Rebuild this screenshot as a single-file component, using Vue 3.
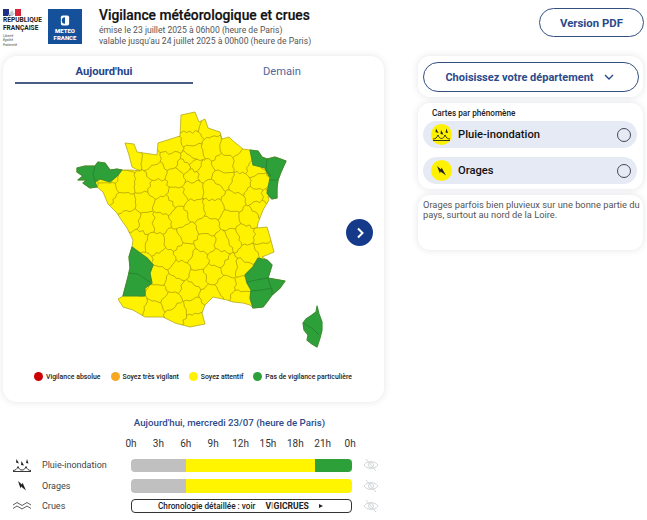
<script setup>
const outline = [[181,115],[195,112],[199,122],[205,119],[208,128],[220,132],[222,139],[229,137],[232,140],[243,149],[250,150],[258,151],[262,157],[267,159],[275,157],[286,161],[281,172],[278,180],[277,188],[277,198],[272,199],[268,196],[269,200],[263,210],[258,223],[257,228],[267,227],[270,237],[274,252],[262,257],[267,260],[272,265],[268,278],[285,281],[280,288],[272,295],[267,302],[263,307],[253,308],[250,305],[243,303],[233,302],[227,300],[213,297],[205,305],[202,313],[205,324],[190,327],[175,323],[163,317],[145,317],[133,310],[123,307],[118,299],[123,296],[128,277],[130,268],[129,257],[132,247],[133,240],[127,228],[120,218],[117,213],[108,204],[103,192],[97,187],[90,188],[83,183],[87,180],[78,180],[83,176],[77,172],[77,168],[85,166],[95,166],[98,162],[105,163],[110,170],[117,169],[122,170],[132,170],[140,171],[132,167],[129,155],[125,143],[134,144],[137,152],[157,155],[158,143],[180,136]]

const greens = [
  [[77,168],[85,166],[95,166],[98,162],[105,163],[110,170],[117,169],[122,170],[118,175],[110,182],[100,179],[95,182],[97,187],[90,188],[83,183],[87,180],[78,180],[83,176],[77,172]],
  [[250,150],[258,151],[262,157],[267,159],[275,157],[286,161],[281,172],[278,180],[277,188],[277,198],[272,199],[267,193],[270,178],[265,168],[253,165]],
  [[132,247],[140,253],[147,258],[153,265],[150,273],[152,283],[145,288],[145,296],[123,296],[128,277],[130,268],[129,257]],
  [[258,258],[267,260],[272,265],[268,278],[285,281],[280,288],[272,295],[267,302],[263,307],[253,308],[250,298],[251,290],[247,283],[245,275],[253,267]],
  [[317,306],[319,314],[322,322],[322,330],[320,338],[317,347],[312,344],[307,340],[308,335],[304,330],[303,323],[306,319],[312,315],[316,312]]
]
const greenInner = 'M95 166L93 174L95 182M267 159L266 170L271 176M269 180L278 180M129 273L138 274L150 282M247 282L256 280L268 278M251 291L262 290L272 288L272 295M268 278L271 288M303 323L312 328L319 335'

const geo = [[5.35,46.1],[3.55,49.55],[3.2,46.4],[6.25,44.1],[6.25,44.65],[7.1,43.95],[4.45,44.75],[4.65,49.6],[1.5,42.95],[4.15,48.3],[2.4,43.1],[2.65,44.3],[5.1,43.55],[-0.35,49.1],[2.65,45.05],[0.2,45.7],[-0.75,45.8],[2.5,47.05],[1.9,45.35],[4.75,47.4],[-2.85,48.45],[2,46.1],[0.75,45.1],[6.35,47.15],[5.2,44.7],[1,49.1],[1.35,48.4],[-4.05,48.25],[4.2,44],[1.15,43.35],[0.45,43.7],[-0.55,44.85],[3.35,43.6],[-1.65,48.15],[1.55,46.75],[0.7,47.25],[5.55,45.25],[5.7,46.75],[-0.75,44],[1.4,47.6],[4.15,45.75],[3.8,45.1],[-1.65,47.35],[2.35,47.9],[1.6,44.6],[0.45,44.35],[3.5,44.5],[-0.55,47.4],[-1.3,49.1],[4.25,48.95],[5.2,48.1],[-0.65,48.15],[6.2,48.75],[5.4,49],[-2.8,47.85],[6.65,49.05],[3.5,47.1],[3.2,50.4],[2.45,49.4],[0.1,48.6],[2.3,50.5],[3.1,45.7],[-0.75,43.25],[0.2,43.05],[2.5,42.6],[7.5,48.65],[7.25,47.85],[4.6,45.9],[6.1,47.65],[4.55,46.65],[0.2,47.95],[6.45,45.5],[6.4,46],[1,49.65],[-0.3,46.55],[2.3,49.95],[2.15,43.8],[1.3,44.1],[6.25,43.45],[5.2,44],[-1.3,46.7],[0.45,46.55],[1.25,45.85],[6.4,48.2],[3.55,47.85],[6.9,47.6],[3,48.65],[1.85,48.8],[2.25,48.5],[2.15,49.08],[2.4,48.85]]

const seeds = geo.map(([lon, lat]) => {
  const s = 16.5 + (48.4 - lat) * 0.35
  return [195.4 + (lon - 2.5) * s, 112 + (51.03 - lat) * 24.7]
})

function clipCell(i) {
  let poly = [[40,80],[320,80],[320,350],[40,350]]
  const a = seeds[i]
  seeds.forEach((b, j) => {
    if (j === i) return
    const mx = (a[0]+b[0])/2, my = (a[1]+b[1])/2, nx = b[0]-a[0], ny = b[1]-a[1]
    const side = p => (p[0]-mx)*nx + (p[1]-my)*ny
    const out = []
    poly.forEach((p, k) => {
      const q = poly[(k+1)%poly.length], sp = side(p), sq = side(q)
      if (sp <= 0) out.push(p)
      if ((sp < 0 && sq > 0) || (sp > 0 && sq < 0)) {
        const t = sp/(sp-sq)
        out.push([p[0]+(q[0]-p[0])*t, p[1]+(q[1]-p[1])*t])
      }
    })
    poly = out
  })
  return poly
}

function noise(x, y) {
  const v = Math.sin(x*12.9898 + y*78.233) * 43758.5453
  return (v - Math.floor(v)) - 0.5
}

function wiggle(p, q) {
  const L = Math.hypot(q[0]-p[0], q[1]-p[1])
  if (L < 1) return ''
  const nx = -(q[1]-p[1])/L, ny = (q[0]-p[0])/L
  let d = `M${p[0].toFixed(1)} ${p[1].toFixed(1)}`
  const n = Math.max(2, Math.round(L/3))
  for (let k = 1; k < n; k++) {
    const t = k/n, bx = p[0]+(q[0]-p[0])*t, by = p[1]+(q[1]-p[1])*t
    const off = noise(bx, by) * 3
    d += `L${(bx+nx*off).toFixed(1)} ${(by+ny*off).toFixed(1)}`
  }
  return d + `L${q[0].toFixed(1)} ${q[1].toFixed(1)}`
}

const seen = new Set()
let borders = ''
seeds.forEach((_, i) => {
  const c = clipCell(i)
  c.forEach((p, k) => {
    const q = c[(k+1)%c.length]
    const a = p.map(v => v.toFixed(1)).join(), b = q.map(v => v.toFixed(1)).join()
    const [s, e, ks] = a < b ? [p, q, a+b] : [q, p, b+a]
    if (seen.has(ks)) return
    seen.add(ks)
    borders += wiggle(s, e)
  })
})

const pts = a => a.map(p => p.join(',')).join(' ')
const outlinePts = pts(outline)
const greenPolys = greens.map(pts)

const legend = [
  { label: 'Vigilance absolue', color: '#cc0000' },
  { label: 'Soyez très vigilant', color: '#f7a823' },
  { label: 'Soyez attentif', color: '#fff200' },
  { label: 'Pas de vigilance particulière', color: '#2ea03a' }
]
const hours = ['0h','3h','6h','9h','12h','15h','18h','21h','0h']
</script>

<template>
  <div class="page">
    <header class="head">
      <div class="rf">
        <svg class="flag" width="18" height="7" viewBox="0 0 18 7">
          <rect width="6" height="7" fill="#1f2f86"/>
          <rect x="6" width="6" height="7" fill="#fff"/>
          <rect x="12" width="6" height="7" fill="#d8243a"/>
          <path d="M5 7C6 5 7 2 10 1C9 3 11 4 12 5C10 5.5 10 6 10 7Z" fill="#c8c8d0"/>
        </svg>
        <div class="rf-name">RÉPUBLIQUE<br>FRANÇAISE</div>
        <div class="rf-motto">Liberté<br>Égalité<br>Fraternité</div>
      </div>
      <div class="mf">
        <svg width="10" height="11" viewBox="0 0 10 12">
          <rect x="0.5" y="0.5" width="9" height="11" rx="2" fill="#fff"/>
          <path d="M5 2.5A3.5 3.5 0 0 0 5 9.5Z" fill="#14519a"/>
        </svg>
        <div class="mf-name">METEO<br>FRANCE</div>
      </div>
      <div class="titles">
        <h1>Vigilance météorologique et crues</h1>
        <p>émise le 23 juillet 2025 à 06h00 (heure de Paris)</p>
        <p>valable jusqu'au 24 juillet 2025 à 00h00 (heure de Paris)</p>
      </div>
      <button class="pdf">Version PDF</button>
    </header>

    <main class="body">
      <section class="left">
        <div class="card map-card">
          <div class="tabs">
            <div class="tab active">Aujourd'hui</div>
            <div class="tab">Demain</div>
          </div>
          <div class="map-wrap">
            <svg class="map" width="381" height="270" viewBox="3 90 381 270">
              <defs>
                <clipPath id="fr"><polygon :points="outlinePts"/></clipPath>
              </defs>
              <polygon :points="outlinePts" fill="#fff200" stroke="#b3a81c" stroke-width="0.8" stroke-linejoin="round"/>
              <path :d="borders" clip-path="url(#fr)" fill="none" stroke="#9c9010" stroke-width="0.65" stroke-linejoin="round"/>
              <polygon v-for="(g, i) in greenPolys" :key="i" :points="g" fill="#2ea03a" stroke="#3c8f35" stroke-width="1.2" stroke-linejoin="round"/>
              <path :d="greenInner" fill="none" stroke="#237a2c" stroke-width="0.7" stroke-linejoin="round"/>
            </svg>
            <button class="next" aria-label="Suivant">
              <svg width="12" height="12" viewBox="0 0 12 12">
                <path d="M4 1.5L8.5 6L4 10.5" fill="none" stroke="#fff" stroke-width="2"/>
              </svg>
            </button>
          </div>
          <div class="legend">
            <div v-for="l in legend" :key="l.label" class="leg">
              <span class="dot" :style="{ background: l.color }"></span>{{ l.label }}
            </div>
          </div>
        </div>

        <div class="timeline">
          <div class="tl-title">Aujourd'hui, mercredi 23/07 (heure de Paris)</div>
          <div class="hours"><span v-for="(h, i) in hours" :key="i">{{ h }}</span></div>
          <div class="tl-row">
            <svg class="tl-ico" width="20" height="14" viewBox="0 0 20 14">
              <path d="M1 12.5C3 12.5 5 11.5 6 8.5M19 12.5C17 12.5 15 11.5 14 8.5M6 8.5C7 11 8 12 10 12C12 12 13 11 14 8.5M1 13.5H19" fill="none" stroke="#222" stroke-width="0.9"/>
              <path d="M4.5 1L7 5.5L4 4.5ZM9.5 3L12 7.5L9 7ZM15 1L16.5 5.5L14 5Z" fill="#222"/>
            </svg>
            <span class="tl-label">Pluie-inondation</span>
            <div class="bar">
              <span class="seg grey"></span><span class="seg yellow w1"></span><span class="seg green"></span>
            </div>
            <svg class="eye" width="16" height="14" viewBox="0 0 16 14"><path d="M1 7C4 2.5 12 2.5 15 7C12 11.5 4 11.5 1 7ZM5.5 7A2.5 2.5 0 1 0 10.5 7A2.5 2.5 0 1 0 5.5 7ZM3 1L13 13" fill="none" stroke="#d3d7d9" stroke-width="1"/></svg>
          </div>
          <div class="tl-row">
            <svg class="tl-ico" width="20" height="14" viewBox="0 0 20 14">
              <path d="M6 2L10 5.5L10.5 3.5L14 11.5L9 7.5L8.5 9.5Z" fill="#222"/>
            </svg>
            <span class="tl-label">Orages</span>
            <div class="bar">
              <span class="seg grey"></span><span class="seg yellow w2"></span>
            </div>
            <svg class="eye" width="16" height="14" viewBox="0 0 16 14"><path d="M1 7C4 2.5 12 2.5 15 7C12 11.5 4 11.5 1 7ZM5.5 7A2.5 2.5 0 1 0 10.5 7A2.5 2.5 0 1 0 5.5 7ZM3 1L13 13" fill="none" stroke="#d3d7d9" stroke-width="1"/></svg>
          </div>
          <div class="tl-row">
            <svg class="tl-ico" width="20" height="14" viewBox="0 0 20 14">
              <path d="M1 6L5 3.5L10 6.5L15 3.5L19 6M1 9.5L5 7L10 10L15 7L19 9.5" fill="none" stroke="#333" stroke-width="0.8"/>
            </svg>
            <span class="tl-label">Crues</span>
            <div class="vigi">
              <span>Chronologie détaillée : voir</span>
              <span class="vc">V<i>I</i>GICRUES</span>
              <span class="tri"></span>
            </div>
            <svg class="eye" width="16" height="14" viewBox="0 0 16 14"><path d="M1 7C4 2.5 12 2.5 15 7C12 11.5 4 11.5 1 7ZM5.5 7A2.5 2.5 0 1 0 10.5 7A2.5 2.5 0 1 0 5.5 7ZM3 1L13 13" fill="none" stroke="#d3d7d9" stroke-width="1"/></svg>
          </div>
        </div>
      </section>

      <aside class="right">
        <div class="card dep-card">
          <button class="dep">
            <span>Choisissez votre département</span>
            <svg width="10" height="6" viewBox="0 0 10 6"><path d="M1 1L5 5L9 1" fill="none" stroke="#2b4a8b" stroke-width="1.4"/></svg>
          </button>
        </div>
        <div class="card phen">
          <div class="phen-title">Cartes par phénomène</div>
          <div class="phen-row">
            <svg class="badge" width="21" height="21" viewBox="0 0 21 21">
              <circle cx="10.5" cy="10.5" r="10.5" fill="#fff200"/>
              <path d="M2 15C4 15 6 14 7 11M19 15C17 15 15 14 14 11M7 11C8 13.5 9 14.5 10.5 14.5C12 14.5 13 13.5 14 11M2 16.5H19" fill="none" stroke="#222" stroke-width="0.9"/>
              <path d="M5 4.5L7.5 9L4.5 8ZM10 6L12.5 10.5L9.5 10ZM15.5 4.5L17 9L14.5 8.5Z" fill="#222"/>
            </svg>
            <span>Pluie-inondation</span>
            <span class="radio"></span>
          </div>
          <div class="phen-row">
            <svg class="badge" width="21" height="21" viewBox="0 0 21 21">
              <circle cx="10.5" cy="10.5" r="10.5" fill="#fff200"/>
              <path d="M6 6L10 9.5L10.5 7.5L15 15.5L9.5 11.5L9 13.5Z" fill="#222"/>
            </svg>
            <span>Orages</span>
            <span class="radio"></span>
          </div>
        </div>
        <div class="card desc">Orages parfois bien pluvieux sur une bonne partie du pays, surtout au nord de la Loire.</div>
      </aside>
    </main>
  </div>
</template>

<style>
html, body { margin: 0; background: #fff; }
</style>

<style scoped>
.page {
  width: 647px; height: 520px; overflow: hidden; background: #fff;
  font-family: Roboto, "Liberation Sans", sans-serif; color: #222;
  box-sizing: border-box;
}
.head { display: flex; align-items: flex-start; height: 56px; box-sizing: border-box; padding: 8px 3px 0 3px; }
.rf { width: 45px; padding-top: 1px; }
.flag { display: block; }
.rf-name { font-size: 6.6px; font-weight: 700; line-height: 7.6px; margin-top: 1px; color: #1a1a1a; }
.rf-motto { font-size: 3.4px; line-height: 4.2px; margin-top: 2px; font-style: italic; color: #444; }
.mf {
  width: 34px; height: 35px; margin-top: 1px; background: #14519a; color: #fff;
  display: flex; flex-direction: column; align-items: center; padding-top: 6px; box-sizing: border-box;
}
.mf svg { display: block; }
.mf-name { font-size: 6px; font-weight: 900; line-height: 7px; text-align: center; margin-top: 1px; }
.titles { margin-left: 17px; flex: 1; }
h1 { margin: -1px 0 2px; font-size: 13.8px; line-height: 16px; font-weight: 500; color: #111; -webkit-text-stroke: 0.2px #111; }
.titles p { margin: 0; font-size: 8.6px; line-height: 11px; color: #555; }
.pdf {
  width: 105px; height: 29px; margin-left: auto; border: 1px solid #34507f; border-radius: 15px; background: #fff;
  font: 700 11.4px Roboto, sans-serif; color: #2b4a8b; padding: 0;
}
.body { display: flex; align-items: flex-start; padding-left: 3px; }
.left { width: 381px; }
.card { background: #fff; border-radius: 12px; box-shadow: 0 0 7px rgba(40, 50, 80, 0.13); box-sizing: border-box; }
.map-card { height: 346px; display: flex; flex-direction: column; border-radius: 14px; }
.tabs { display: flex; padding: 9px 11px 0 12px; height: 34px; box-sizing: border-box; }
.tab { flex: 0 0 178px; height: 18px; text-align: center; font-size: 11.2px; line-height: 14px; color: #54689b; box-sizing: border-box; }
.tab.active { color: #27448a; font-weight: 700; border-bottom: 2px solid #4a5d84; height: 19px; }
.map-wrap { position: relative; height: 270px; }
.map { display: block; }
.next {
  position: absolute; left: 343px; top: 129px; width: 27px; height: 27px; border-radius: 50%;
  background: #163a8a; border: 0; padding: 0; display: flex; align-items: center; justify-content: center;
}
.legend { display: flex; gap: 10px; padding: 12px 0 0 31px; }
.leg { display: flex; align-items: center; gap: 3px; font-size: 6.9px; font-weight: 500; color: #222; white-space: nowrap; }
.dot { width: 9px; height: 9px; border-radius: 50%; }
.timeline { padding-top: 14px; }
.tl-title { text-align: center; margin-left: 86px; margin-right: 14px; font-size: 9.7px; font-weight: 500; line-height: 14px; color: #2b4a8b; white-space: nowrap; }
.hours { display: grid; grid-template-columns: repeat(9, 27.4px); margin: 8px 0 0 114.3px; font-size: 10px; line-height: 12px; color: #333; text-align: center; }
.tl-row { display: flex; align-items: center; height: 20.5px; }
.hours + .tl-row { margin-top: 5px; }
.tl-ico { margin-left: 9px; flex: none; }
.tl-label { width: 89px; margin-left: 10px; font-size: 9px; color: #444; }
.bar { display: flex; width: 221px; height: 13.5px; border-radius: 4px; overflow: hidden; }
.seg { display: block; height: 100%; }
.grey { width: 55px; background: #c0c0c0; }
.yellow { background: #fff500; }
.w1 { width: 129px; }
.w2 { width: 166px; }
.green { width: 37px; background: #2ea03a; }
.eye { margin-left: 11px; flex: none; }
.vigi {
  width: 221px; height: 14px; border: 1px solid #333; border-radius: 4px; box-sizing: border-box;
  display: flex; align-items: center; padding-left: 26px; font-size: 8.2px; font-weight: 500; color: #222; white-space: nowrap;
}
.vc { margin-left: 10px; font-weight: 700; font-size: 8.6px; }
.vc i { font-style: normal; color: #e0a020; }
.tri { margin-left: 10px; border-left: 4px solid #222; border-top: 2.5px solid transparent; border-bottom: 2.5px solid transparent; }
.right { width: 225px; margin-left: 34px; display: flex; flex-direction: column; gap: 6px; }
.dep-card { height: 41px; padding: 6px 4px 0 5px; }
.dep {
  width: 216px; height: 30px; border: 1px solid #34507f; border-radius: 15px; background: #fff; padding: 0 3px 0 0;
  display: flex; align-items: center; justify-content: center; gap: 10px;
  font: 700 11px Roboto, sans-serif; color: #2b4a8b;
}
.phen { height: 86px; padding: 5px 6px 0 5px; }
.phen-title { font-size: 8.2px; font-weight: 500; line-height: 10px; margin: 0 0 3px 9px; color: #222; }
.phen-row {
  display: flex; align-items: center; height: 27px; margin-bottom: 9px; background: #e6eaf5; border-radius: 13.5px;
  font-size: 11.2px; font-weight: 500; color: #111; padding-left: 8px; box-sizing: border-box;
}
.badge { margin-right: 6px; flex: none; }
.radio { width: 12px; height: 12px; border: 1px solid #445; border-radius: 50%; margin-left: auto; margin-right: 6px; box-sizing: content-box; }
.desc { height: 55px; padding: 5px 2px 5px 5px; font-size: 9.3px; line-height: 9.8px; color: #555; }
</style>
